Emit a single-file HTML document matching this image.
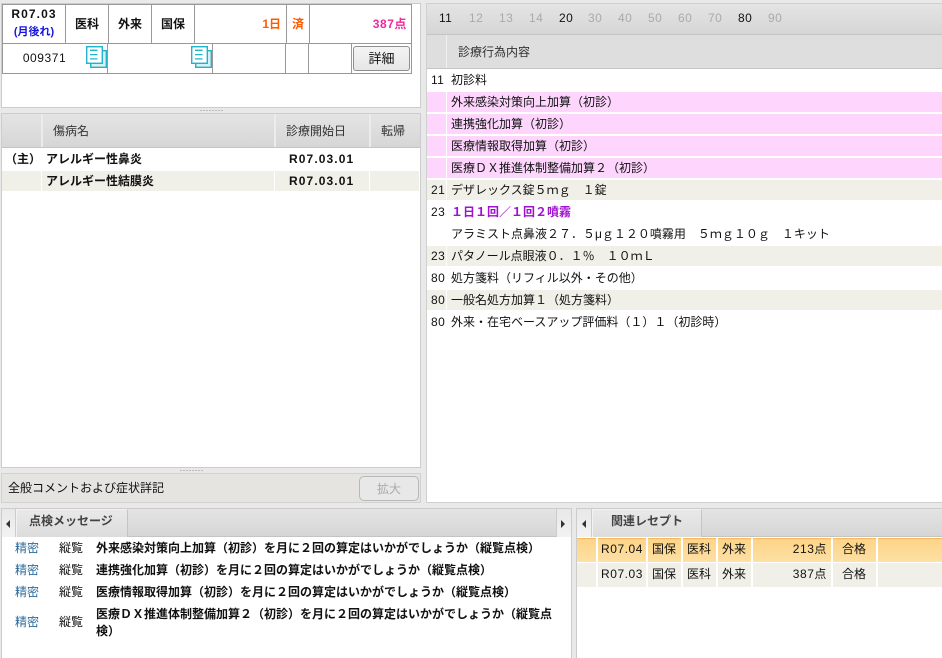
<!DOCTYPE html>
<html lang="ja"><head><meta charset="utf-8">
<style>
html,body{margin:0;padding:0;background:#e9e9e9}
#r{position:relative;width:942px;height:658px;overflow:hidden;background:#e9e9e9;font:12px/22px "Liberation Sans","Noto Sans CJK JP",sans-serif;color:#111}
#r div{position:absolute;box-sizing:border-box}
.t{white-space:nowrap}
.b{font-weight:bold}
.g{background:linear-gradient(#e4e4e4,#d6d6d6)}
.l{background:#999}
.w{background:#fff}
.c{text-align:center}
.rt{text-align:right}
.eg{background:#f0f0e8}
.pk{background:#fdd5fd}
.n{letter-spacing:.55px}
.nb{letter-spacing:1.1px}
.s{background:#fff;width:2px}
</style></head><body><div id="r">

<!-- top-left panel -->
<div class="w" style="left:1px;top:3px;width:420px;height:105px;border:1px solid #ccc"></div>
<div class="l" style="left:2px;top:4px;width:410px;height:1px"></div>
<div class="l" style="left:2px;top:43px;width:410px;height:1px"></div>
<div class="l" style="left:2px;top:73px;width:410px;height:1px"></div>
<div class="l" style="left:2px;top:4px;width:1px;height:70px"></div>
<div class="l" style="left:411px;top:4px;width:1px;height:70px"></div>
<div class="l" style="left:65px;top:4px;width:1px;height:39px"></div>
<div class="l" style="left:108px;top:4px;width:1px;height:39px"></div>
<div class="l" style="left:151px;top:4px;width:1px;height:39px"></div>
<div class="l" style="left:194px;top:4px;width:1px;height:39px"></div>
<div class="l" style="left:286px;top:4px;width:1px;height:39px"></div>
<div class="l" style="left:309px;top:4px;width:1px;height:39px"></div>
<div class="l" style="left:107px;top:44px;width:1px;height:29px"></div>
<div class="l" style="left:212px;top:44px;width:1px;height:29px"></div>
<div class="l" style="left:285px;top:44px;width:1px;height:29px"></div>
<div class="l" style="left:308px;top:44px;width:1px;height:29px"></div>
<div class="l" style="left:351px;top:44px;width:1px;height:29px"></div>

<div class="t c b nb" style="left:3px;top:3px;width:62px;height:22px">R07.03</div>
<div class="t c b" style="left:3px;top:21px;width:62px;height:22px;font-size:11px;color:#1414e0">(月後れ)</div>
<div class="t c b" style="left:66px;top:13px;width:42px">医科</div>
<div class="t c b" style="left:109px;top:13px;width:42px">外来</div>
<div class="t c b" style="left:152px;top:13px;width:42px">国保</div>
<div class="t rt b" style="left:195px;top:13px;width:86px;color:#ff5a00">1日</div>
<div class="t c b" style="left:287px;top:13px;width:22px;color:#ff5a00">済</div>
<div class="t rt b n" style="left:310px;top:13px;width:97px;color:#f0289c">387点</div>
<div class="t c n" style="left:3px;top:47px;width:83px">009371</div>

<svg style="position:absolute;left:86px;top:46px" width="21" height="22" fill="none"><rect x="4.700" y="4.700" width="15.600" height="16.600" fill="#d8f0f5" stroke="#1fb4cc" stroke-width="1.400"/><rect x=".7" y=".7" width="15.600" height="16.600" fill="#fff" stroke="#1fb4cc" stroke-width="1.400"/><path d="M4 4.300h7.500M4 8.600h7.500M4 12.900h7.500" stroke="#1fb4cc" stroke-width="1.300"/></svg>
<svg style="position:absolute;left:191px;top:46px" width="21" height="22" fill="none"><rect x="4.700" y="4.700" width="15.600" height="16.600" fill="#d8f0f5" stroke="#1fb4cc" stroke-width="1.400"/><rect x=".7" y=".7" width="15.600" height="16.600" fill="#fff" stroke="#1fb4cc" stroke-width="1.400"/><path d="M4 4.300h7.500M4 8.600h7.500M4 12.900h7.500" stroke="#1fb4cc" stroke-width="1.300"/></svg>

<div class="t c" style="left:353px;top:46px;width:57px;height:25px;border:1px solid #8f8f8f;border-radius:3px;background:linear-gradient(#f4f4f4,#e6e6e6);line-height:24px;font-size:13px">詳細</div>

<div style="left:200px;top:110px;width:24px;height:1px;background:repeating-linear-gradient(90deg,#bbb 0 2px,transparent 2px 3px)"></div>

<!-- disease panel -->
<div class="w" style="left:1px;top:113px;width:420px;height:355px;border:1px solid #ccc"></div>
<div class="g" style="left:2px;top:114px;width:418px;height:34px;border-bottom:1px solid #c4c4c4"></div>
<div style="left:41px;top:114px;width:2px;height:33px;background:#ececec"></div>
<div style="left:274px;top:114px;width:2px;height:33px;background:#ececec"></div>
<div style="left:369px;top:114px;width:2px;height:33px;background:#ececec"></div>
<div class="t" style="left:53px;top:120px;color:#333">傷病名</div>
<div class="t" style="left:286px;top:120px;color:#333">診療開始日</div>
<div class="t" style="left:381px;top:120px;color:#333">転帰</div>

<div class="t b" style="left:5px;top:148px">&#xFF08;主&#xFF09;</div>
<div class="t b" style="left:46px;top:148px">アレルギー性鼻炎</div>
<div class="t b nb" style="left:289px;top:148px">R07.03.01</div>
<div class="eg" style="left:2px;top:171px;width:39px;height:20px"></div>
<div class="eg" style="left:42px;top:171px;width:232px;height:20px"></div>
<div class="eg" style="left:275px;top:171px;width:94px;height:20px"></div>
<div class="eg" style="left:370px;top:171px;width:49px;height:20px"></div>
<div class="t b" style="left:46px;top:170px">アレルギー性結膜炎</div>
<div class="t b nb" style="left:289px;top:170px">R07.03.01</div>

<div style="left:180px;top:470px;width:24px;height:1px;background:repeating-linear-gradient(90deg,#bbb 0 2px,transparent 2px 3px)"></div>

<!-- comment bar -->
<div style="left:1px;top:473px;width:420px;height:30px;background:#e6e4e0;border:1px solid #d2d2d2"></div>
<div class="t" style="left:8px;top:477px">全般コメントおよび症状詳記</div>
<div class="t c" style="left:359px;top:476px;width:60px;height:25px;border:1px solid #b8b8b8;border-radius:5px;background:#e8e8e8;color:#aaa;line-height:24px">拡大</div>

<!-- right panel -->
<div class="w" style="left:426px;top:3px;width:516px;height:500px;border:1px solid #d0d0d0;border-right:0"></div>
<div class="g" style="left:427px;top:4px;width:515px;height:31px;border-bottom:1px solid #c4c4c4"></div>
<div class="t" style="left:439px;top:7px;color:#111;letter-spacing:.4px">11</div>
<div class="t" style="left:469px;top:7px;color:#aaa;letter-spacing:.4px">12</div>
<div class="t" style="left:499px;top:7px;color:#aaa;letter-spacing:.4px">13</div>
<div class="t" style="left:529px;top:7px;color:#aaa;letter-spacing:.4px">14</div>
<div class="t" style="left:559px;top:7px;color:#111;letter-spacing:.4px">20</div>
<div class="t" style="left:588px;top:7px;color:#aaa;letter-spacing:.4px">30</div>
<div class="t" style="left:618px;top:7px;color:#aaa;letter-spacing:.4px">40</div>
<div class="t" style="left:648px;top:7px;color:#aaa;letter-spacing:.4px">50</div>
<div class="t" style="left:678px;top:7px;color:#aaa;letter-spacing:.4px">60</div>
<div class="t" style="left:708px;top:7px;color:#aaa;letter-spacing:.4px">70</div>
<div class="t" style="left:738px;top:7px;color:#111;letter-spacing:.4px">80</div>
<div class="t" style="left:768px;top:7px;color:#aaa;letter-spacing:.4px">90</div>

<div style="left:427px;top:35px;width:515px;height:34px;border-bottom:1px solid #c4c4c4;background:#dedede"></div>
<div style="left:446px;top:35px;width:1px;height:33px;background:#f0f0f0"></div>
<div class="t" style="left:458px;top:41px;color:#333">診療行為内容</div>

<div class="t" style="left:431px;top:69px;letter-spacing:.4px">11</div>
<div class="t" style="left:451px;top:69px">初診料</div>

<div class="pk" style="left:427px;top:92px;width:19px;height:20px"></div><div class="pk" style="left:447px;top:92px;width:495px;height:20px"></div>
<div class="t" style="left:451px;top:91px">外来感染対策向上加算&#xFF08;初診&#xFF09;</div>
<div class="pk" style="left:427px;top:114px;width:19px;height:20px"></div><div class="pk" style="left:447px;top:114px;width:495px;height:20px"></div>
<div class="t" style="left:451px;top:113px">連携強化加算&#xFF08;初診&#xFF09;</div>
<div class="pk" style="left:427px;top:136px;width:19px;height:20px"></div><div class="pk" style="left:447px;top:136px;width:495px;height:20px"></div>
<div class="t" style="left:451px;top:135px">医療情報取得加算&#xFF08;初診&#xFF09;</div>
<div class="pk" style="left:427px;top:158px;width:19px;height:20px"></div><div class="pk" style="left:447px;top:158px;width:495px;height:20px"></div>
<div class="t" style="left:451px;top:157px">医療&#xFF24;&#xFF38;推進体制整備加算&#xFF12;&#xFF08;初診&#xFF09;</div>

<div class="eg" style="left:427px;top:180px;width:19px;height:20px"></div><div class="eg" style="left:447px;top:180px;width:495px;height:20px"></div>
<div class="t" style="left:431px;top:179px;letter-spacing:.4px">21</div>
<div class="t" style="left:451px;top:179px">デザレックス錠&#xFF15;&#xFF4D;&#xFF47;&#x3000;&#xFF11;錠</div>

<div class="t" style="left:431px;top:201px;letter-spacing:.4px">23</div>
<div class="t b" style="left:451px;top:201px;color:#a010d0">&#xFF11;日&#xFF11;回&#xFF0F;&#xFF11;回&#xFF12;噴霧</div>
<div class="t" style="left:451px;top:223px">アラミスト点鼻液&#xFF12;&#xFF17;&#xFF0E;&#xFF15;μ&#xFF47;&#xFF11;&#xFF12;&#xFF10;噴霧用&#x3000;&#xFF15;&#xFF4D;&#xFF47;&#xFF11;&#xFF10;&#xFF47;&#x3000;&#xFF11;キット</div>

<div class="eg" style="left:427px;top:246px;width:19px;height:20px"></div><div class="eg" style="left:447px;top:246px;width:495px;height:20px"></div>
<div class="t" style="left:431px;top:245px;letter-spacing:.4px">23</div>
<div class="t" style="left:451px;top:245px">パタノール点眼液&#xFF10;&#xFF0E;&#xFF11;&#xFF05;&#x3000;&#xFF11;&#xFF10;&#xFF4D;&#xFF2C;</div>

<div class="t" style="left:431px;top:267px;letter-spacing:.4px">80</div>
<div class="t" style="left:451px;top:267px">処方箋料&#xFF08;リフィル以外・その他&#xFF09;</div>

<div class="eg" style="left:427px;top:290px;width:19px;height:20px"></div><div class="eg" style="left:447px;top:290px;width:495px;height:20px"></div>
<div class="t" style="left:431px;top:289px;letter-spacing:.4px">80</div>
<div class="t" style="left:451px;top:289px">一般名処方加算&#xFF11;&#xFF08;処方箋料&#xFF09;</div>

<div class="t" style="left:431px;top:311px;letter-spacing:.4px">80</div>
<div class="t" style="left:451px;top:311px">外来・在宅ベースアップ評価料&#xFF08;&#xFF11;&#xFF09;&#xFF11;&#xFF08;初診時&#xFF09;</div>

<!-- bottom left -->
<div class="w" style="left:1px;top:508px;width:571px;height:150px;border:1px solid #ccc;border-bottom:0"></div>
<div class="g" style="left:2px;top:509px;width:569px;height:28px;border-bottom:1px solid #c4c4c4"></div>
<div style="left:2px;top:509px;width:14px;height:28px;background:linear-gradient(#e8e8e8,#f2f2f2);border-right:1px solid #ccc"></div>
<div style="left:6px;top:520px;width:0;height:0;border:4px solid transparent;border-left:0;border-right:4px solid #333"></div>
<div style="left:16px;top:509px;width:112px;height:28px;background:linear-gradient(#e9e9e9,#dcdcdc);border-right:1px solid #c4c4c4;border-left:1px solid #f2f2f2;border-top:1px solid #f2f2f2"></div>
<div class="t b" style="left:29px;top:510px;color:#444">点検メッセージ</div>
<div style="left:556px;top:509px;width:15px;height:28px;background:linear-gradient(#e8e8e8,#f2f2f2);border-left:1px solid #ccc"></div>
<div style="left:561px;top:520px;width:0;height:0;border:4px solid transparent;border-right:0;border-left:4px solid #333"></div>

<div class="t" style="left:15px;top:537px;color:#2a6a9a">精密</div><div class="t" style="left:59px;top:537px">縦覧</div>
<div class="t b" style="left:96px;top:537px">外来感染対策向上加算&#xFF08;初診&#xFF09;を月に&#xFF12;回の算定はいかがでしょうか&#xFF08;縦覧点検&#xFF09;</div>
<div class="t" style="left:15px;top:559px;color:#2a6a9a">精密</div><div class="t" style="left:59px;top:559px">縦覧</div>
<div class="t b" style="left:96px;top:559px">連携強化加算&#xFF08;初診&#xFF09;を月に&#xFF12;回の算定はいかがでしょうか&#xFF08;縦覧点検&#xFF09;</div>
<div class="t" style="left:15px;top:581px;color:#2a6a9a">精密</div><div class="t" style="left:59px;top:581px">縦覧</div>
<div class="t b" style="left:96px;top:581px">医療情報取得加算&#xFF08;初診&#xFF09;を月に&#xFF12;回の算定はいかがでしょうか&#xFF08;縦覧点検&#xFF09;</div>
<div class="t" style="left:15px;top:611px;color:#2a6a9a">精密</div><div class="t" style="left:59px;top:611px">縦覧</div>
<div class="t b" style="left:96px;top:603px">医療&#xFF24;&#xFF38;推進体制整備加算&#xFF12;&#xFF08;初診&#xFF09;を月に&#xFF12;回の算定はいかがでしょうか&#xFF08;縦覧点</div>
<div class="t b" style="left:96px;top:620px">検&#xFF09;</div>

<!-- bottom right -->
<div class="w" style="left:576px;top:508px;width:366px;height:150px;border:1px solid #ccc;border-right:0;border-bottom:0"></div>
<div class="g" style="left:577px;top:509px;width:365px;height:28px;border-bottom:1px solid #c4c4c4"></div>
<div style="left:577px;top:509px;width:15px;height:28px;background:linear-gradient(#e8e8e8,#f2f2f2);border-right:1px solid #ccc"></div>
<div style="left:582px;top:520px;width:0;height:0;border:4px solid transparent;border-left:0;border-right:4px solid #333"></div>
<div style="left:592px;top:509px;width:110px;height:28px;background:linear-gradient(#e9e9e9,#dcdcdc);border-right:1px solid #c4c4c4;border-left:1px solid #f2f2f2;border-top:1px solid #f2f2f2"></div>
<div class="t b" style="left:611px;top:510px;color:#444">関連レセプト</div>

<div style="left:577px;top:538px;width:365px;height:24px;background:linear-gradient(#fdd488,#fde0a4);border-top:1px solid #f5b860"></div>
<div class="s" style="left:596px;top:538px;height:24px"></div>
<div class="s" style="left:646px;top:538px;height:24px"></div>
<div class="s" style="left:681px;top:538px;height:24px"></div>
<div class="s" style="left:716px;top:538px;height:24px"></div>
<div class="s" style="left:751px;top:538px;height:24px"></div>
<div class="s" style="left:831px;top:538px;height:24px"></div>
<div class="s" style="left:876px;top:538px;height:24px"></div>
<div class="t n" style="left:601px;top:538px">R07.04</div>
<div class="t" style="left:652px;top:538px">国保</div><div class="t" style="left:687px;top:538px">医科</div><div class="t" style="left:722px;top:538px">外来</div>
<div class="t rt n" style="left:752px;top:538px;width:75px">213点</div>
<div class="t" style="left:842px;top:538px">合格</div>

<div class="eg" style="left:577px;top:563px;width:365px;height:24px"></div>
<div class="s" style="left:596px;top:563px;height:24px"></div>
<div class="s" style="left:646px;top:563px;height:24px"></div>
<div class="s" style="left:681px;top:563px;height:24px"></div>
<div class="s" style="left:716px;top:563px;height:24px"></div>
<div class="s" style="left:751px;top:563px;height:24px"></div>
<div class="s" style="left:831px;top:563px;height:24px"></div>
<div class="s" style="left:876px;top:563px;height:24px"></div>
<div class="t n" style="left:601px;top:563px">R07.03</div>
<div class="t" style="left:652px;top:563px">国保</div><div class="t" style="left:687px;top:563px">医科</div><div class="t" style="left:722px;top:563px">外来</div>
<div class="t rt n" style="left:752px;top:563px;width:75px">387点</div>
<div class="t" style="left:842px;top:563px">合格</div>

</div></body></html>
